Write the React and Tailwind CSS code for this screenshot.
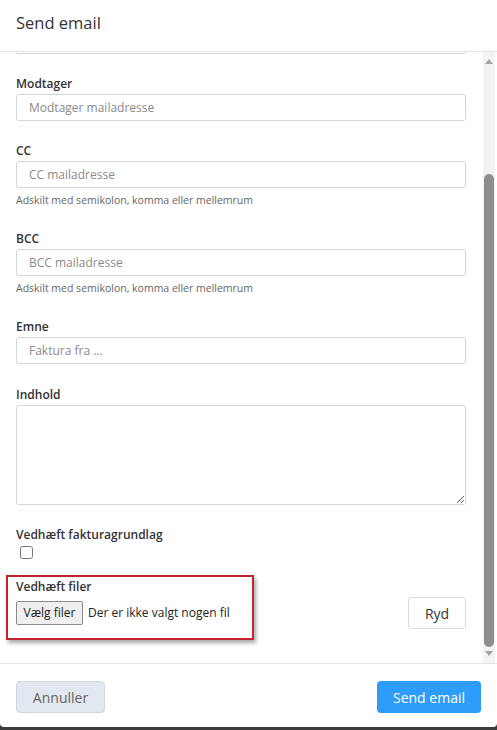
import React from 'react';

const font = { fontFamily: '"Open Sans", "Liberation Sans", sans-serif' };

const Label = ({ children }) => (
    <div className="text-[12px] leading-[20px] font-semibold text-[#333]">{children}</div>
);

const TextInput = ({ placeholder }) => (
    <input
        type="text"
        placeholder={placeholder}
        className="w-full h-[27px] px-3 rounded-[3px] border border-[#d6d6d6] bg-white text-[12px] text-[#333] placeholder:text-[#8a8a8a] outline-none"
    />
);

const Help = () => (
    <div className="mt-1 text-[10.5px] leading-4 text-[#666]">Adskilt med semikolon, komma eller mellemrum</div>
);

const ScrollBar = () => (
    <div className="w-3 mr-[2px] bg-[#f3f3f3] flex flex-col items-center">
        <svg width="10" height="8" viewBox="0 0 10 8" className="mt-[5px]">
            <path d="M1 7 L5 2 L9 7 Z" fill="#a3a3a3" />
        </svg>
        <div className="flex-1 w-full flex flex-col justify-end pb-[3px]">
            <div className="mx-auto w-[10px] h-[473px] rounded-full bg-[#8d8d8d]" />
        </div>
        <svg width="10" height="8" viewBox="0 0 10 8" className="mb-[5px]">
            <path d="M1 1 L5 6 L9 1 Z" fill="#a3a3a3" />
        </svg>
    </div>
);

export default function App() {
    return (
        <div className="w-[497px] h-[730px] bg-[#3d3d3d] overflow-hidden" style={font}>
            <div className="h-[727px] bg-white rounded-b-[4px] flex flex-col">
                {/* header */}
                <div className="h-[52px] shrink-0 px-4 flex items-center border-b border-[#e5e5e5]">
                    <h4 className="text-[16.5px] text-[#333] -mt-[4px]">Send email</h4>
                </div>

                {/* body */}
                <div className="h-[612px] shrink-0 flex overflow-hidden border-b border-[#e5e5e5]">
                    <div className="flex-1 pl-4 pr-[17px]">
                        <div className="h-[2px] border-x border-b border-[#d6d6d6] rounded-b-[3px]" />

                        <div className="mt-[20px]">
                            <Label>Modtager</Label>
                            <TextInput placeholder="Modtager mailadresse" />
                        </div>

                        <div className="mt-5">
                            <Label>CC</Label>
                            <TextInput placeholder="CC mailadresse" />
                            <Help />
                        </div>

                        <div className="mt-[21px]">
                            <Label>BCC</Label>
                            <TextInput placeholder="BCC mailadresse" />
                            <Help />
                        </div>

                        <div className="mt-[21px]">
                            <Label>Emne</Label>
                            <TextInput placeholder="Faktura fra ..." />
                        </div>

                        <div className="mt-[21px]">
                            <Label>Indhold</Label>
                            <textarea className="block w-full h-[100px] rounded-[3px] border border-[#d6d6d6] outline-none" />
                        </div>

                        <div className="mt-[20px]">
                            <Label>Vedhæft fakturagrundlag</Label>
                            <input type="checkbox" className="block ml-1 mt-px w-[13px] h-[13px]" />
                        </div>

                        <div className="mt-[18px] flex items-end justify-between">
                            <div className="relative">
                                <Label>Vedhæft filer</Label>
                                <div className="flex items-center mt-[4px] mb-[4px]">
                                    <button className="h-[24px] w-[67px] bg-[#efefef] border border-[#8a8a8a] rounded-[2px] text-[12px] text-[#222]">
                                        Vælg filer
                                    </button>
                                    <span className="ml-[5px] text-[12px] text-[#222]">Der er ikke valgt nogen fil</span>
                                </div>
                                <div className="absolute -left-[10px] -top-[2px] w-[248px] h-[65px] border-2 border-[#c4232b] shadow-[2px_3px_4px_rgba(0,0,0,0.35)] pointer-events-none" />
                            </div>
                            <button className="h-[32px] w-[58px] border border-[#dcdcdc] rounded-[3px] bg-white text-[14px] text-[#333]">
                                Ryd
                            </button>
                        </div>
                    </div>
                    <ScrollBar />
                </div>

                {/* footer */}
                <div className="flex-1 px-4 flex items-center justify-between">
                    <button className="h-[32px] w-[89px] rounded-[4px] bg-[#e2e8f0] border border-[#cdd5df] text-[14px] text-[#666] mt-[3px]">
                        Annuller
                    </button>
                    <button className="h-[32px] w-[104px] rounded-[4px] bg-[#2e9cfb] text-[14px] text-white mt-[3px]">
                        Send email
                    </button>
                </div>
            </div>
        </div>
    );
}
